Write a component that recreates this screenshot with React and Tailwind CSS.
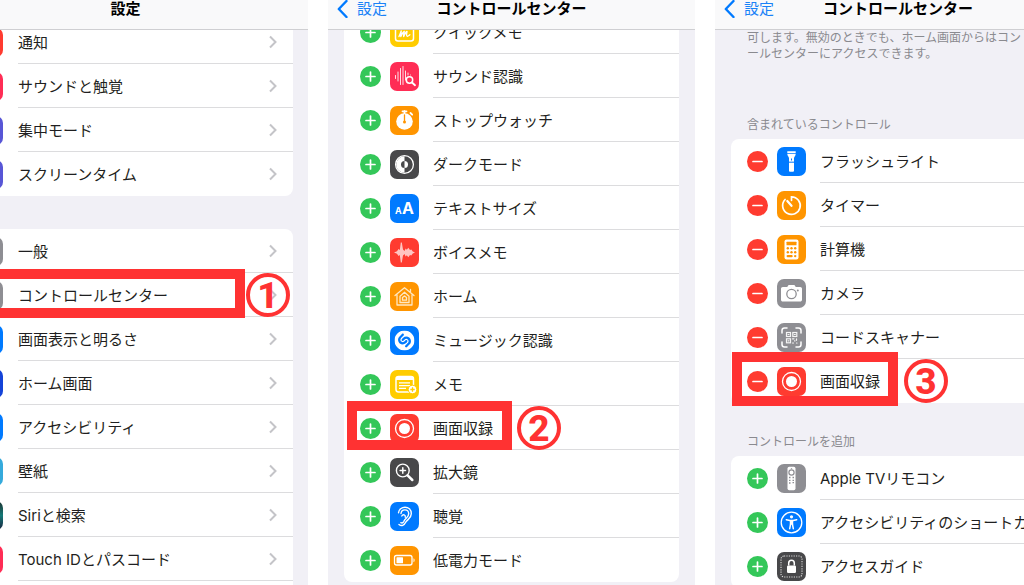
import React from "react";
import { SiShazam } from "react-icons/si";

const iconArt = {
  quickNote: (
    <g fill="none" stroke="#fff" strokeWidth="1.5" strokeLinecap="round" strokeLinejoin="round">
      <rect x="5.5" y="5" width="18" height="18" rx="2.5" />
      <path d="M6 8.5h17" strokeWidth="2" />
      <path d="M9 18.5c1-2 1.800-4 2.200-5.500-.2 2.500-.4 4-.4 5.500 1-2.500 2.200-4.500 3.400-5.200-.3 2-.6 3.500-.5 5.200 1-2.500 2-4.500 3.300-5-.4 2-.8 4.500.2 4.700.900.2 1.700-.7 2.600-1.400" strokeWidth="1.400" />
    </g>
  ),
  soundRecognition: (
    <g fill="none" stroke="#fff" strokeLinecap="round">
      <path d="M5.500 13.500v3M8 10v9M10.500 6.500v16M13 4.500v18M15.500 9v9M18 11v2M20.500 13v0" strokeWidth="1" opacity="0.850" />
      <circle cx="19.500" cy="18" r="3.200" strokeWidth="1.500" />
      <path d="M22 20.500l3 2.700" strokeWidth="1.900" />
    </g>
  ),
  stopwatch: (
    <g>
      <circle cx="14.500" cy="15.500" r="8.300" fill="#fff" />
      <path d="M12.500 5.300h4M14.500 5v3M20.500 7l1.700 1.700" stroke="#fff" strokeWidth="1.800" strokeLinecap="round" />
      <path d="M14.500 9v6.500" stroke="#ff9500" strokeWidth="1.300" strokeLinecap="round" />
      <circle cx="14.500" cy="16" r="1.500" fill="#ff9500" />
    </g>
  ),
  darkMode: (
    <g>
      <circle cx="14.500" cy="14.500" r="8.900" fill="none" stroke="#fff" strokeWidth="1.300" />
      <path d="M14.500 6.200a8.300 8.300 0 0 0 0 16.600v-4.800a3.500 3.500 0 0 1 0-7z" fill="#fff" />
      <path d="M14.500 11a3.500 3.500 0 0 1 0 7z" fill="#fff" />
    </g>
  ),
  textSize: (
    <g fill="#fff" fontFamily="Inter, sans-serif" fontWeight="700">
      <text x="5" y="20" fontSize="9">A</text>
      <text x="12" y="20" fontSize="16">A</text>
    </g>
  ),
  voiceMemo: (
    <path
      d="M4 14.500L7 13.300L8.500 11L9.800 12L10.800 4.500H11.800L13 11.500L14.500 13L15.700 10.500L16.800 11.800L18.300 9.800L20 12L21.300 11.500L22.800 13.600L25 14.500L22.800 15.400L21.300 17.500L20 17L18.300 19.200L16.800 17.200L15.700 18.500L14.500 16L13 17.500L11.800 24.500H10.800L9.800 17L8.500 18L7 15.700Z"
      fill="#fff"
      opacity="0.700"
    />
  ),
  home: (
    <g fill="none" stroke="#ffe8c2" strokeWidth="1.300" strokeLinejoin="round" strokeLinecap="round">
      <path d="M5 13.500l9.500-7.800 9.500 7.800M7 12.500v10.500h15V12.500M20.500 9.500V7.500" />
      <path d="M10 14.200v6.300h9v-6.300l-4.500-3.900z" />
      <path d="M12.500 15.500v2.700h4v-2.700l-2-1.600z" />
    </g>
  ),
  musicRecognition: <SiShazam x="4.500" y="4.500" size={20} color="#fff" />,
  memo: (
    <g>
      <rect x="6" y="6.500" width="17.500" height="15.500" rx="2.500" fill="none" stroke="#fff" strokeWidth="1.500" />
      <path d="M6 7h17.500v3H6z" fill="#fff" />
      <path d="M9 12.800h11M9 15.600h11M9 18.400h7" stroke="#fff" strokeWidth="1.300" />
      <circle cx="22.500" cy="19.500" r="4.300" fill="#fff" stroke="#ffcc00" strokeWidth="1" />
      <path d="M22.500 17.300v4.400M20.300 19.500h4.400" stroke="#ffcc00" strokeWidth="1.300" />
    </g>
  ),
  screenRecording: (
    <g>
      <circle cx="14.500" cy="14.500" r="9" fill="none" stroke="#fff" strokeWidth="1.300" />
      <circle cx="14.500" cy="14.500" r="5.500" fill="#fff" />
    </g>
  ),
  magnifier: (
    <g fill="none" stroke="#fff" strokeLinecap="round">
      <circle cx="12.800" cy="12.500" r="6.400" strokeWidth="1.400" />
      <path d="M12.800 9.800v5.400M10.100 12.500h5.400" strokeWidth="1.500" />
      <path d="M17.600 17.300l4.700 4.700" strokeWidth="2.500" />
    </g>
  ),
  hearing: (
    <g fill="none" stroke="#fff" strokeWidth="1.400" strokeLinecap="round" strokeLinejoin="round">
      <path d="M8.500 10.800c.4-7 12.800-8 12.800 1 0 5-4.300 5.500-5.800 8.700-1.300 3-4 4-6.500 2" />
      <path d="M11 11.500c.5-5 7.600-4.800 7.700.3 0 3.700-3.600 4.500-4.900 7.700-.6 1.300-1.700 1.700-3 1.200" />
      <path d="M11.800 14c1.200-2.200 4-1.400 3.500 1.200" />
    </g>
  ),
  lowPower: (
    <g>
      <rect x="4.500" y="9.500" width="17.500" height="9.500" rx="2" fill="none" stroke="#fff" strokeWidth="1.300" />
      <rect x="6.500" y="11.300" width="6.500" height="6" rx="0.600" fill="#fff" />
      <path d="M23.500 12.300c1.500.6 1.500 3.400 0 4z" fill="#fff" />
    </g>
  ),
  flashlight: (
    <g fill="#fff">
      <path d="M10.300 4.200h8.400v2h-8.400zM10.300 7h8.400c0 2-1.700 2.700-1.700 4.300v12.200c0 .8-.5 1.300-1.300 1.300h-2.400c-.8 0-1.300-.5-1.300-1.300V11.300c0-1.600-1.700-2.300-1.700-4.300z" />
      <path d="M12 14.500h5v1.500h-5z" fill="#007aff" opacity="0.700" />
      <path d="M14.500 11.500v2" stroke="#007aff" strokeWidth="1" />
    </g>
  ),
  timer: (
    <g fill="none" stroke="#fff" strokeWidth="1.700" strokeLinecap="round">
      <path d="M14.500 9.300V5.800a8.800 8.800 0 1 1-6.400 2.700" />
      <path d="M10.300 10l4.200 4.800" strokeWidth="2.200" />
    </g>
  ),
  calculator: (
    <g>
      <rect x="7.500" y="4.500" width="14" height="20" rx="2" fill="#fff" />
      <g fill="#ff9500">
        <rect x="9.500" y="6.800" width="10" height="3.400" rx="0.500" />
        <circle cx="10.800" cy="13.300" r="1.200" /><circle cx="14.500" cy="13.300" r="1.200" /><circle cx="18.200" cy="13.300" r="1.200" />
        <circle cx="10.800" cy="17.200" r="1.200" /><circle cx="14.500" cy="17.200" r="1.200" /><circle cx="18.200" cy="17.200" r="1.200" />
        <rect x="9.600" y="20" width="6.100" height="2.300" rx="1.100" /><circle cx="18.200" cy="21.100" r="1.200" />
      </g>
    </g>
  ),
  camera: (
    <g>
      <path d="M5.800 8h4.400l1.400-2h5.800l1.400 2h4.400c1 0 1.800.8 1.800 1.800v10.900c0 1-.8 1.800-1.800 1.800H5.800c-1 0-1.800-.8-1.800-1.800V9.800C4 8.800 4.800 8 5.800 8z" fill="#fff" />
      <circle cx="14.500" cy="15" r="4.700" fill="none" stroke="#8e8e93" strokeWidth="1.300" />
      <circle cx="20.800" cy="11.500" r="1" fill="#8e8e93" />
    </g>
  ),
  codeScanner: (
    <g fill="none" stroke="#fff" strokeLinecap="round">
      <path d="M5 10V7.500C5 6 6 5 7.500 5H10M19 5h2.500C23 5 24 6 24 7.500V10M24 19v2.500c0 1.500-1 2.500-2.500 2.500H19M10 24H7.500C6 24 5 23 5 21.500V19" strokeWidth="1.500" />
      <g strokeWidth="1.200" opacity="0.900">
        <rect x="9.500" y="9.500" width="4" height="4" /><rect x="15.800" y="9.500" width="4" height="4" /><rect x="9.500" y="15.800" width="4" height="4" />
        <path d="M11 11.500h1M17.300 11.500h1M11 17.800h1M15.500 15.800h1.500M19.500 15.800v1.500M17.500 17.800h.5M15.500 20h1M19.500 20h.5" />
      </g>
    </g>
  ),
  appleTvRemote: (
    <g>
      <rect x="10.500" y="2.700" width="8" height="23.500" rx="1.700" fill="#fff" />
      <g fill="none" stroke="#8e8e93">
        <circle cx="14.500" cy="8.500" r="2.600" strokeWidth="1.200" />
        <path d="M14.500 4v.8M12 13.500h1.500M15.500 13.500H17M12 16.300h1.500M15.500 16.300H17M12 19h1.500M15.500 18.700H17" strokeWidth="1.300" />
      </g>
    </g>
  ),
  accessibility: (
    <g>
      <circle cx="14.500" cy="14.500" r="10.300" fill="none" stroke="#fff" strokeWidth="1.300" />
      <circle cx="14.500" cy="8.800" r="1.600" fill="#fff" />
      <path d="M9.300 11.700l3.500.9h3.400l3.500-.9M12.700 20.700l1-5h1.600l1 5" fill="none" stroke="#fff" strokeWidth="1.500" strokeLinecap="round" strokeLinejoin="round" />
      <path d="M12.800 12h3.400v4.500h-3.400z" fill="#fff" />
    </g>
  ),
  guidedAccess: (
    <g>
      <rect x="4" y="4" width="21" height="21" rx="3" fill="none" stroke="#fff" strokeWidth="1.100" strokeDasharray="1.200 1.200" opacity="0.800" />
      <rect x="10" y="13.500" width="9" height="7.500" rx="1.200" fill="#fff" />
      <path d="M11.700 13.500v-2.300c0-3.800 5.600-3.800 5.600 0v2.300" fill="none" stroke="#fff" strokeWidth="1.500" />
    </g>
  ),
};

const general = [
  { label: "一般", tone: "bg-[#8e8e93]" },
  { label: "コントロールセンター", tone: "bg-[#8e8e93]", step: 1 },
  { label: "画面表示と明るさ", tone: "bg-[#007aff]" },
  { label: "ホーム画面", tone: "bg-[#1443d8]" },
  { label: "アクセシビリティ", tone: "bg-[#007aff]" },
  { label: "壁紙", tone: "bg-[#35aadc]" },
  { label: "Siriと検索", tone: "bg-linear-to-b from-[#17322f] via-[#137a78] to-[#14243f]" },
  { label: "Touch IDとパスコード", tone: "bg-[#ff2d55]" },
];

const alerts = [
  { label: "通知", tone: "bg-[#ff3b30]" },
  { label: "サウンドと触覚", tone: "bg-[#ff2d55]" },
  { label: "集中モード", tone: "bg-[#5856d6]" },
  { label: "スクリーンタイム", tone: "bg-[#5856d6]" },
];

const available = [
  { label: "クイックメモ", icon: "quickNote", tone: "bg-[#ffcc00]" },
  { label: "サウンド認識", icon: "soundRecognition", tone: "bg-[#ff2d55]" },
  { label: "ストップウォッチ", icon: "stopwatch", tone: "bg-[#ff9500]" },
  { label: "ダークモード", icon: "darkMode", tone: "bg-[#48484a]" },
  { label: "テキストサイズ", icon: "textSize", tone: "bg-[#007aff]" },
  { label: "ボイスメモ", icon: "voiceMemo", tone: "bg-[#ff3b30]" },
  { label: "ホーム", icon: "home", tone: "bg-[#ff9500]" },
  { label: "ミュージック認識", icon: "musicRecognition", tone: "bg-[#007aff]" },
  { label: "メモ", icon: "memo", tone: "bg-[#ffcc00]" },
  { label: "画面収録", icon: "screenRecording", tone: "bg-[#ff3b30]", step: 2 },
  { label: "拡大鏡", icon: "magnifier", tone: "bg-[#48484a]" },
  { label: "聴覚", icon: "hearing", tone: "bg-[#007aff]" },
  { label: "低電力モード", icon: "lowPower", tone: "bg-[#ff9500]" },
];

const included = [
  { label: "フラッシュライト", icon: "flashlight", tone: "bg-[#007aff]" },
  { label: "タイマー", icon: "timer", tone: "bg-[#ff9500]" },
  { label: "計算機", icon: "calculator", tone: "bg-[#ff9500]" },
  { label: "カメラ", icon: "camera", tone: "bg-[#8e8e93]" },
  { label: "コードスキャナー", icon: "codeScanner", tone: "bg-[#8e8e93]" },
  { label: "画面収録", icon: "screenRecording", tone: "bg-[#ff3b30]", step: 3 },
];

const more = [
  { label: "Apple TVリモコン", icon: "appleTvRemote", tone: "bg-[#8e8e93]" },
  { label: "アクセシビリティのショートカット", icon: "accessibility", tone: "bg-[#007aff]" },
  { label: "アクセスガイド", icon: "guidedAccess", tone: "bg-[#48484a]" },
];

const highlight = {
  1: {
    frame: "left-0 right-12 -top-1 -bottom-px",
    badge: "right-[3px]",
  },
  2: {
    frame: "left-[3px] w-[165px] -top-[5px] bottom-0",
    badge: "left-[173px]",
  },
  3: {
    frame: "left-px w-[166px] -top-[7px] -bottom-[3px]",
    badge: "left-[173px]",
  },
};

function StepMark({ step }) {
  const place = highlight[step];
  return (
    <>
      <span className={`pointer-events-none absolute z-10 border-[10px] border-[#ff3232] ${place.frame}`} />
      <span
        className={`pointer-events-none absolute top-0 z-10 flex size-11 items-center justify-center rounded-full border-4 border-[#ff3232] font-[Roboto,sans-serif] text-[37px] leading-none font-extrabold text-[#ff3232] ${place.badge}`}
      >
        {step}
      </span>
    </>
  );
}

function Tile({ icon, tone }) {
  return (
    <span className={`size-[29px] shrink-0 overflow-hidden rounded-[7px] ${tone}`}>
      {icon && (
        <svg viewBox="0 0 29 29" className="size-full" aria-hidden="true">
          {iconArt[icon]}
        </svg>
      )}
    </span>
  );
}

function Card({ className = "mx-4", children }) {
  return <ul className={`rounded-lg bg-white ${className}`}>{children}</ul>;
}

function LinkRow({ item }) {
  return (
    <li className="group relative">
      <a href="#" className="flex h-11 items-center gap-[15px] pl-[15px]">
        <Tile tone={item.tone} />
        <span className="flex h-full flex-1 items-center justify-between border-b border-[#dcdcde] pr-4 group-last:border-transparent">
          <span className="pt-[3px]">{item.label}</span>
          <svg viewBox="0 0 8 14" className="h-[14px] w-2" fill="none" stroke="#c4c4c8" strokeWidth="2" aria-hidden="true">
            <path d="M1 1.500 6.500 7 1 12.500" />
          </svg>
        </span>
      </a>
      {item.step && <StepMark step={item.step} />}
    </li>
  );
}

function ControlRow({ item, remove }) {
  return (
    <li className="group relative flex h-11 items-center pl-4">
      <button
        type="button"
        aria-label={`${item.label}を${remove ? "削除" : "追加"}`}
        className={`mr-[9px] flex size-[21px] shrink-0 items-center justify-center rounded-full ${remove ? "bg-[#ff3b30]" : "bg-[#34c759]"}`}
      >
        <svg viewBox="0 0 21 21" className="size-full" stroke="#fff" strokeWidth="1.700" strokeLinecap="round" aria-hidden="true">
          <path d={remove ? "M6 10.500h9" : "M6 10.500h9M10.500 6v9"} />
        </svg>
      </button>
      <Tile icon={item.icon} tone={item.tone} />
      <span className="ml-[14px] flex h-full flex-1 items-center border-b border-[#dcdcde] pt-[3px] whitespace-nowrap group-last:border-transparent">
        {item.label}
      </span>
      {item.step && <StepMark step={item.step} />}
    </li>
  );
}

function Header({ title, back }) {
  return (
    <header className="relative z-20 grid h-[30px] shrink-0 grid-cols-[1fr_auto_1fr] items-start border-b border-[#cfcfd2] bg-[#f9f9fa] leading-[18px]">
      <div>
        {back && (
          <a href="#" className="ml-[9px] flex items-center gap-[9px] text-[#1a82f7]">
            <svg viewBox="0 0 11 18" className="h-[18px] w-[11px]" fill="none" stroke="#007aff" strokeWidth="2.400" strokeLinecap="round" strokeLinejoin="round" aria-hidden="true">
              <path d="M9.500 1 1.800 9l7.700 8" />
            </svg>
            {back}
          </a>
        )}
      </div>
      <h1 className="font-bold text-black">{title}</h1>
    </header>
  );
}

function Phone({ title, back, className = "", children }) {
  return (
    <section className="overflow-hidden bg-[#f1f0f6]">
      <div className={`flex h-full flex-col ${className}`}>
        <Header title={title} back={back} />
        <div className="min-h-0 flex-1 overflow-hidden">{children}</div>
      </div>
    </section>
  );
}

export default function App() {
  return (
    <main
      lang="ja"
      className="grid h-screen grid-cols-[308fr_367fr_309fr] gap-5 overflow-hidden bg-white font-[Inter,Noto_Sans_CJK_JP,sans-serif] text-[15px] text-[#1f1f21]"
    >
      <Phone title="設定" className="-ml-[57px]">
        <Card className="-mt-[10px] mr-[15px] ml-4">
          {alerts.map((item) => <LinkRow key={item.label} item={item} />)}
        </Card>
        <Card className="mt-[33px] mr-[15px] ml-4">
          {general.map((item) => <LinkRow key={item.label} item={item} />)}
          <li className="h-11" />
        </Card>
      </Phone>

      <Phone title="コントロールセンター" back="設定">
        <Card className="mx-4 -mt-5">
          {available.map((item) => <ControlRow key={item.label} item={item} />)}
        </Card>
      </Phone>

      <Phone title="コントロールセンター" back="設定" className="-mr-[57px]">
        <p className="px-8 text-xs text-[#8a8a8f]">
          可します。無効のときでも、ホーム画面からはコントロールセンターにアクセスできます。
        </p>
        <h2 className="mt-[55px] mb-[6px] px-8 text-xs text-[#8a8a8f]">含まれているコントロール</h2>
        <Card>
          {included.map((item) => <ControlRow key={item.label} item={item} remove />)}
        </Card>
        <h2 className="mt-[31px] mb-[6px] px-8 text-xs text-[#8a8a8f]">コントロールを追加</h2>
        <Card>
          {more.map((item) => <ControlRow key={item.label} item={item} />)}
        </Card>
      </Phone>
    </main>
  );
}
